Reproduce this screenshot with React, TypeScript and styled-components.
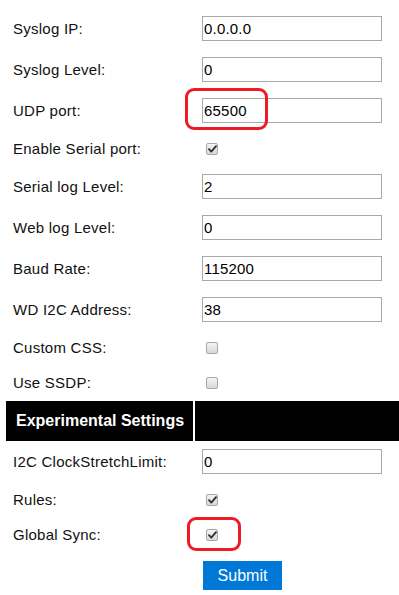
import React, { useState } from "react";
import { createGlobalStyle, styled } from "styled-components";

const GlobalStyle = createGlobalStyle`
    html, body {
        margin: 0;
        padding: 0;
        background: #fff;
    }
    body {
        font-family: "Liberation Sans", Arial, sans-serif;
        font-size: 15px;
        color: #000;
    }
`;

const Page = styled.div`
    width: 399px;
    height: 595px;
    padding-top: 8px;
    box-sizing: border-box;
    overflow: hidden;
`;

const Row = styled.div<{ $tall?: boolean }>`
    position: relative;
    display: grid;
    grid-template-columns: 202px 180px;
    align-items: center;
    height: ${(p) => (p.$tall ? "41px" : "35px")};
`;

const Label = styled.span`
    padding-left: 13px;
    white-space: nowrap;
    letter-spacing: 0.25px;
    color: #111;
`;

const TextInput = styled.input`
    box-sizing: border-box;
    width: 180px;
    height: 25px;
    margin: 0;
    padding: 0 0 0 1px;
    border: 1px solid #a9a9a9;
    border-radius: 0;
    font-family: "Liberation Sans", Arial, sans-serif;
    font-size: 15px;
    letter-spacing: 0.2px;
    color: #000;
    outline: none;
`;

const CheckCell = styled.div`
    padding-left: 4px;
    display: flex;
    align-items: center;
`;

const CheckBox = styled.span<{ $checked: boolean }>`
    width: 12px;
    height: 12px;
    box-sizing: border-box;
    border: 1px solid #a8a8a8;
    border-radius: 2px;
    background: linear-gradient(#f4f4f4, #d8d8d8);
    display: flex;
    align-items: center;
    justify-content: center;
    cursor: pointer;
`;

const HeaderRow = styled.div`
    display: flex;
    gap: 2px;
    margin: 1px 0 0 6px;
    height: 40px;
`;

const HeaderCell = styled.div<{ $grow?: boolean }>`
    background: #000;
    color: #fff;
    font-weight: bold;
    font-size: 16px;
    display: flex;
    align-items: center;
    padding-left: 10px;
    width: ${(p) => (p.$grow ? "auto" : "177px")};
    flex: ${(p) => (p.$grow ? "1" : "none")};
`;

// red annotation frames drawn over the form
const Highlight = styled.div<{ $left: number; $top: number; $w: number; $h: number }>`
    position: absolute;
    left: ${(p) => p.$left}px;
    top: ${(p) => p.$top}px;
    width: ${(p) => p.$w}px;
    height: ${(p) => p.$h}px;
    box-sizing: border-box;
    border: 3.5px solid #ed1c24;
    border-radius: 9px;
    pointer-events: none;
`;

const SubmitRow = styled.div`
    padding: 9px 0 0 203px;
`;

const SubmitButton = styled.button`
    width: 79px;
    height: 29px;
    border: none;
    border-radius: 0;
    background: #0078d7;
    color: #fff;
    font-family: "Liberation Sans", Arial, sans-serif;
    font-size: 16px;
    padding: 0;
    cursor: pointer;
`;

const Tick = () => (
    <svg width="9" height="8" viewBox="0 0 9 8">
        <path d="M1 4.2 L3.3 6.6 L8 1.2" fill="none" stroke="#333" strokeWidth="1.9" strokeLinecap="round" strokeLinejoin="round" />
    </svg>
);

type Field =
    | { kind: "text"; label: string; value: string; mark?: boolean }
    | { kind: "check"; label: string; value: boolean; mark?: boolean };

const general: Field[] = [
    { kind: "text", label: "Syslog IP:", value: "0.0.0.0" },
    { kind: "text", label: "Syslog Level:", value: "0" },
    { kind: "text", label: "UDP port:", value: "65500", mark: true },
    { kind: "check", label: "Enable Serial port:", value: true },
    { kind: "text", label: "Serial log Level:", value: "2" },
    { kind: "text", label: "Web log Level:", value: "0" },
    { kind: "text", label: "Baud Rate:", value: "115200" },
    { kind: "text", label: "WD I2C Address:", value: "38" },
    { kind: "check", label: "Custom CSS:", value: false },
    { kind: "check", label: "Use SSDP:", value: false },
];

const experimental: Field[] = [
    { kind: "text", label: "I2C ClockStretchLimit:", value: "0" },
    { kind: "check", label: "Rules:", value: true },
    { kind: "check", label: "Global Sync:", value: true, mark: true },
];

const FieldRow = ({ field }: { field: Field }) => {
    const [text, setText] = useState(field.kind === "text" ? field.value : "");
    const [checked, setChecked] = useState(field.kind === "check" ? field.value : false);

    if (field.kind === "text") {
        return (
            <Row $tall>
                <Label>{field.label}</Label>
                <TextInput value={text} onChange={(e) => setText(e.target.value)} />
                {field.mark && <Highlight $left={185} $top={-2} $w={83} $h={42} />}
            </Row>
        );
    }

    return (
        <Row>
            <Label>{field.label}</Label>
            <CheckCell>
                <CheckBox $checked={checked} onClick={() => setChecked(!checked)}>
                    {checked && <Tick />}
                </CheckBox>
            </CheckCell>
            {field.mark && <Highlight $left={187} $top={0} $w={54} $h={34} />}
        </Row>
    );
};

export default function App() {
    return (
        <Page>
            <GlobalStyle />
            {general.map((f) => (
                <FieldRow key={f.label} field={f} />
            ))}
            <HeaderRow>
                <HeaderCell>Experimental Settings</HeaderCell>
                <HeaderCell $grow />
            </HeaderRow>
            {experimental.map((f) => (
                <FieldRow key={f.label} field={f} />
            ))}
            <SubmitRow>
                <SubmitButton>Submit</SubmitButton>
            </SubmitRow>
        </Page>
    );
}
